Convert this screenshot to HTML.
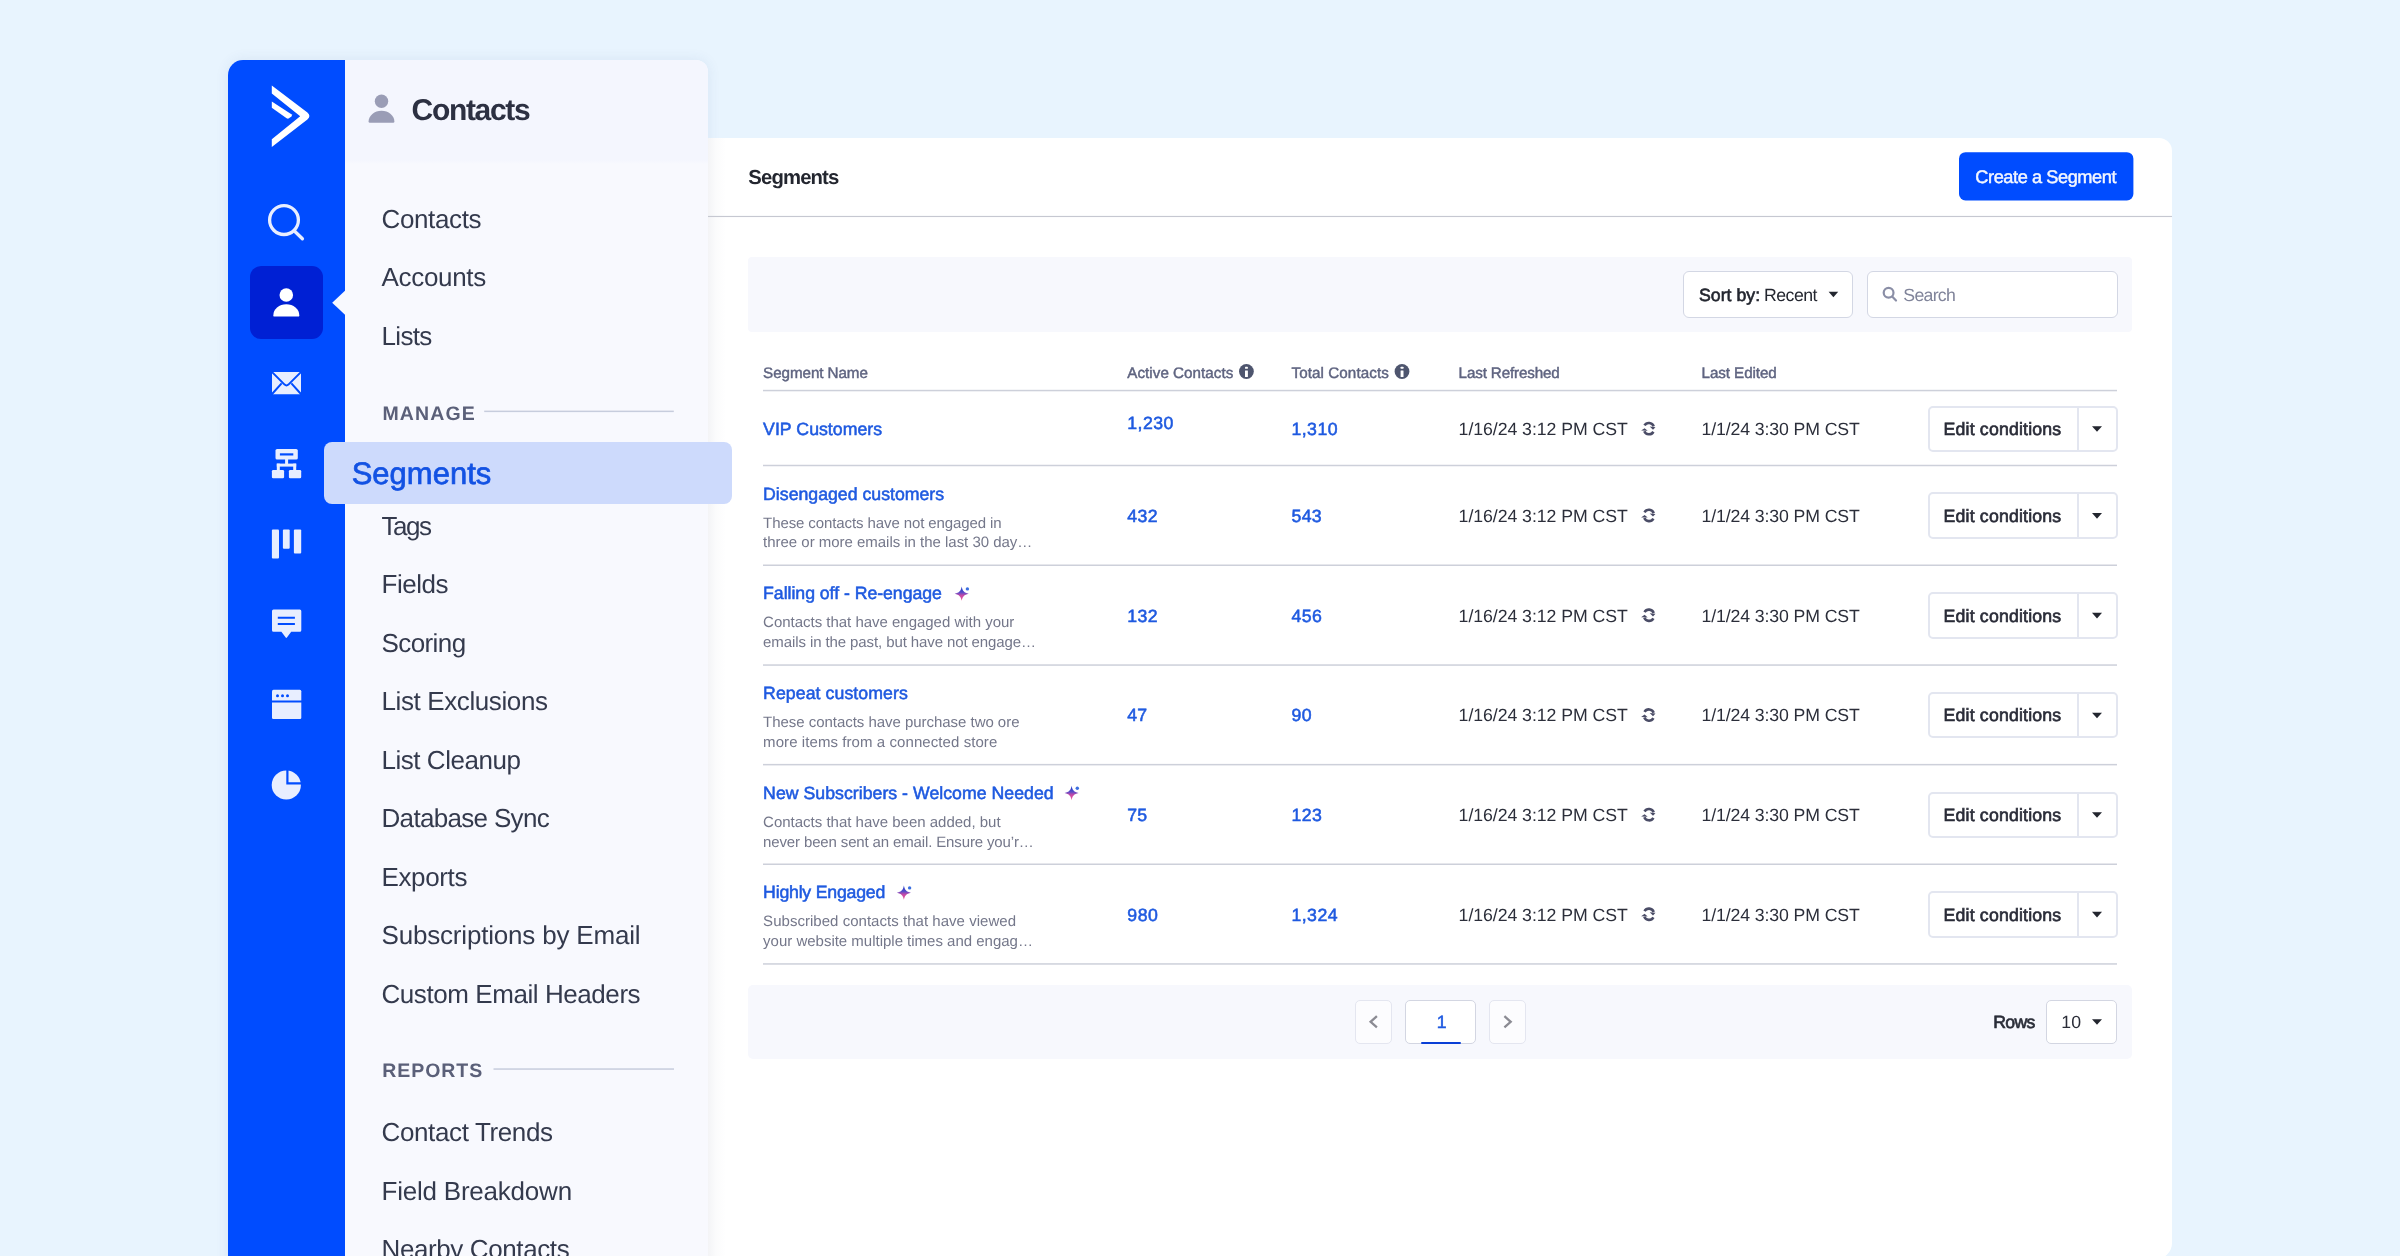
<!DOCTYPE html>
<html lang="en"><head><meta charset="utf-8"><title>Segments</title>
<style>
html,body{margin:0;padding:0;}
body{width:2400px;height:1256px;overflow:hidden;position:relative;background:#e8f4fe;
 font-family:"Liberation Sans",sans-serif;}
body>*{position:absolute;}
.t{position:absolute;white-space:pre;line-height:1em;text-rendering:geometricPrecision;font-family:"Liberation Sans",sans-serif;}
svg{position:absolute;overflow:visible;}
/* blue rail */
#side{left:228px;top:60px;width:480px;height:1210px;border-radius:15px 12px 0 0;box-shadow:0 0 14px rgba(50,80,140,.09);}
#rail{left:228px;top:60px;width:117px;height:1200px;background:#004cff;border-top-left-radius:15px;}
#act{left:250px;top:266px;width:73px;height:73px;border-radius:11px;background:#0020d4;}
/* light nav */
#nav{left:345px;top:60px;width:363px;height:1200px;background:#f8f9fe;border-top-right-radius:12px;}
#navh{left:345px;top:60px;width:363px;height:104px;background:linear-gradient(#f4f6fe 0,#f4f6fe 96%,#f8f9fe 100%);border-top-right-radius:12px;}
#sel{left:324px;top:442px;width:408px;height:61.5px;border-radius:8px;background:#cddafc;}
/* main panel */
#main{left:708px;top:138px;width:1464px;height:1121px;background:#fff;border-top-right-radius:13px;border-bottom-right-radius:16px;}
#shade{left:708px;top:138px;width:18px;height:1118px;background:linear-gradient(90deg,rgba(60,70,110,.06),rgba(60,70,110,.018) 45%,rgba(60,70,110,0));}
#tool{left:748px;top:257px;width:1384.4px;height:74.8px;border-radius:4px;background:#f7f8fd;}
.box{box-sizing:border-box;background:#fff;border:1.3px solid #d3d7e4;border-radius:6px;}
#sort{left:1682.8px;top:271.1px;width:170.7px;height:46.6px;}
#srch{left:1867.4px;top:271.1px;width:250.2px;height:46.6px;}
.eb{left:1927.5px;width:190px;height:46.5px;box-sizing:border-box;border:2px solid #e3e6f0;border-radius:5px;background:#fff;}
.eb i{position:absolute;left:147.2px;top:0;width:2px;height:100%;background:#e3e6f0;}
#pag{left:748px;top:985px;width:1384.4px;height:73.6px;border-radius:5px;background:#f7f8fd;}
.pb{box-sizing:border-box;top:1000px;height:43.8px;border-radius:5px;}
#prev{left:1355.2px;width:36.5px;background:#fcfcfe;border:1.3px solid #e4e6f0;}
#next{left:1489.2px;width:36.5px;background:#fcfcfe;border:1.3px solid #e4e6f0;}
#p1{left:1405.2px;width:71.3px;background:#fff;border:1.3px solid #d3d6e2;}
#p1u{left:1420.8px;top:1041.6px;width:39.9px;height:2.6px;background:#0a3fd6;border-radius:1px;}
#rsel{left:2046.3px;width:70.4px;background:#fff;border:1.3px solid #d3d6e2;}
#txt{left:0;top:0;width:2400px;height:1256px;will-change:transform;}

</style></head>
<body>
<div id="side"></div>
<div id="rail"></div>
<div id="nav"></div>
<div id="navh"></div>
<div id="main"></div>
<div id="shade"></div>
<div id="tool"></div>
<div id="sort" class="box"></div>
<div id="srch" class="box"></div>
<div id="pag"></div>
<div id="prev" class="pb"></div>
<div id="p1" class="pb"></div>
<div id="p1u"></div>
<div id="next" class="pb"></div>
<div id="rsel" class="pb"></div>
<div id="act"></div>
<div id="sel"></div>
<svg id="ico" style="left:0;top:0" width="2400" height="1256" viewBox="0 0 2400 1256">
<rect x="1959" y="152.2" width="174.4" height="48.3" rx="6.5" fill="#004cff"/>
<!-- lines -->
<g fill="#cdd0da">
<rect x="708" y="215.9" width="1464" height="1.15" fill="#c6c8d1"/>
<rect x="763" y="389.8" width="1354" height="1.5"/>
<rect x="763" y="464.75" width="1354" height="1.5"/>
<rect x="763" y="564.5" width="1354" height="1.5"/>
<rect x="763" y="664.3" width="1354" height="1.5"/>
<rect x="763" y="763.9" width="1354" height="1.5"/>
<rect x="763" y="863.5" width="1354" height="1.5"/>
<rect x="763" y="963.2" width="1354" height="1.5"/>
</g>
<g fill="#c7cddd">
<rect x="484.2" y="410.6" width="189.6" height="1.5"/>
<rect x="493.5" y="1068.3" width="180.5" height="1.5"/>
</g>
<!-- logo -->
<g fill="#ffffff">
<path d="M271.8 85.6L307.4 112.4Q309.4 114.2 309.4 116Q309.4 117.8 307.4 119.6L271.8 147L271.8 139.2L300.2 116.2L271.8 93.4Z"/>
<path d="M271.8 101.5L291.4 114.2Q292.6 115.2 291.4 116.4L289 118.3Q287.8 119 286.6 118.2L271.8 107.8Z"/>
</g>
<!-- search -->
<g fill="none" stroke="#e8eeff" stroke-width="3.3" stroke-linecap="round">
<circle cx="284" cy="220.1" r="14.4"/><path d="M294.4 231L302.4 238.8"/>
</g>
<!-- pointer -->
<path fill="#f8f9fe" d="M345.5 290.2L332.2 302.8L345.5 315.2Z"/>
<!-- active person -->
<g fill="#ffffff">
<circle cx="286.3" cy="295" r="6.8"/>
<path d="M273.3 315.4A13 11.2 0 0 1 299.3 315.4Q299.3 316.6 298.1 316.6H274.5Q273.3 316.6 273.3 315.4Z"/>
</g>
<!-- header person -->
<g fill="#9a9db6">
<circle cx="381.5" cy="101.2" r="6.7"/>
<path d="M368.6 121.5A12.9 10.7 0 0 1 394.4 121.5Q394.4 122.7 393.2 122.7H369.8Q368.6 122.7 368.6 121.5Z"/>
</g>
<g fill="#e8eeff">
<!-- mail -->
<rect x="272" y="371.9" width="29" height="22.3" rx="1"/>
<!-- automation -->
<rect x="275.5" y="448.9" width="22.3" height="10.7" rx="1.6"/>
<rect x="285.1" y="459" width="3" height="6"/>
<rect x="276.8" y="463.6" width="19.4" height="3"/>
<rect x="276.8" y="463.6" width="3" height="7"/>
<rect x="293.2" y="463.6" width="3" height="7"/>
<rect x="271.9" y="469.9" width="12.2" height="8.4" rx="1.3"/>
<rect x="288.9" y="469.9" width="12.3" height="8.4" rx="1.3"/>
<!-- pipeline -->
<rect x="271.9" y="529.4" width="7.1" height="29" rx="1"/>
<rect x="282.9" y="529.4" width="6.8" height="19.3" rx="1"/>
<rect x="293.9" y="529.4" width="7.3" height="24.2" rx="1"/>
<!-- chat -->
<path d="M273.5 609.6H299.8Q301.3 609.6 301.3 611.1V630.2Q301.3 631.7 299.8 631.7H291.2L286.9 637.6Q286.3 638.3 285.7 637.6L281.4 631.7H273.5Q272 631.7 272 630.2V611.1Q272 609.6 273.5 609.6Z"/>
<!-- window -->
<path d="M273.5 689.8H299.8Q301.3 689.8 301.3 691.3V700.4H272V691.3Q272 689.8 273.5 689.8Z"/>
<path d="M272 702.6H301.3V717.8Q301.3 719.1 300 719.1H273.3Q272 719.1 272 717.8Z"/>
<!-- pie -->
<circle cx="286.3" cy="785" r="14.6"/>
</g>
<g fill="none" stroke="#004cff">
<!-- mail lines -->
<path stroke-width="2" d="M271.6 371.6L284.6 384.6Q286.5 386.3 288.4 384.6L301.4 371.6M271.6 394.5L281.6 383.4M301.4 394.5L291.4 383.4"/>
<!-- automation slot -->
<path stroke-width="2.2" d="M279.9 454.4H293.3"/>
<!-- chat lines -->
<path stroke-width="2" d="M277.8 617.8H294.9M277.8 623.9H294.9"/>
<!-- pie cut -->
<path stroke-width="2.2" d="M287.4 769V783.3H302"/>
</g>
<g fill="#004cff"><circle cx="277.5" cy="695.7" r="1.5"/><circle cx="282.5" cy="695.7" r="1.5"/><circle cx="287.5" cy="695.7" r="1.5"/></g>
<!-- sort caret -->
<path fill="#23262f" d="M1828.6 291.7H1838.2L1833.4 297.2Z"/>
<!-- search icon small -->
<g fill="none" stroke="#8a8ea6" stroke-width="2.2" stroke-linecap="round"><circle cx="1888.6" cy="292.8" r="4.9"/><path d="M1892.4 296.8L1896 300.5"/></g>
<!-- info icons -->
<g fill="#4e556e"><circle cx="1246.4" cy="371.5" r="7.4"/><circle cx="1402" cy="371.5" r="7.4"/></g>
<g fill="#ffffff">
<rect x="1245" y="366.7" width="2.9" height="2.1" rx=".6"/><rect x="1245" y="370.4" width="2.9" height="6.7" rx=".4"/>
<rect x="1400.6" y="366.7" width="2.9" height="2.1" rx=".6"/><rect x="1400.6" y="370.4" width="2.9" height="6.7" rx=".4"/>
</g>
<!-- pager chevrons -->
<g fill="none" stroke="#8b8b93" stroke-width="2.3">
<path d="M1376.9 1016.2L1370.6 1021.8L1376.9 1027.4"/>
<path d="M1504.4 1016.2L1510.7 1021.8L1504.4 1027.4"/>
</g>
<!-- rows caret -->
<path fill="#23262f" d="M2092 1019.2H2102L2097 1024.8Z"/>
</svg>

<div class="eb" style="top:405.50px"><i></i></div>
<div class="eb" style="top:492.35px"><i></i></div>
<div class="eb" style="top:592.15px"><i></i></div>
<div class="eb" style="top:691.95px"><i></i></div>
<div class="eb" style="top:791.55px"><i></i></div>
<div class="eb" style="top:891.15px"><i></i></div>
<svg id="ico2" style="left:0;top:0" width="2400" height="1256" viewBox="0 0 2400 1256">
<defs><linearGradient id="spg" x1="0" y1="0" x2="0" y2="1"><stop offset="0" stop-color="#1236c8"/><stop offset=".42" stop-color="#5a4cc8"/><stop offset=".62" stop-color="#c24aa8"/><stop offset="1" stop-color="#f0559a"/></linearGradient></defs>
<path fill="#23262f" d="M2092.0 426.20h10l-5 5.6z"/>
<g transform="translate(1640.6 420.15)"><g fill="none" stroke="#4a4c66" stroke-width="2.6"><path d="M3.9 5.3A5.1 5.1 0 0 1 13.1 6.2"/><path d="M12.8 11.6A5.1 5.1 0 0 1 3.7 11"/></g><path fill="#4a4c66" d="M9.1 6.4L14.9 7L12.4 9.6ZM0.5 10.4L4 8L7.1 10.6Z"/></g>
<path fill="#23262f" d="M2092.0 513.05h10l-5 5.6z"/>
<g transform="translate(1640.6 507.00)"><g fill="none" stroke="#4a4c66" stroke-width="2.6"><path d="M3.9 5.3A5.1 5.1 0 0 1 13.1 6.2"/><path d="M12.8 11.6A5.1 5.1 0 0 1 3.7 11"/></g><path fill="#4a4c66" d="M9.1 6.4L14.9 7L12.4 9.6ZM0.5 10.4L4 8L7.1 10.6Z"/></g>
<path fill="#23262f" d="M2092.0 612.85h10l-5 5.6z"/>
<g transform="translate(1640.6 606.80)"><g fill="none" stroke="#4a4c66" stroke-width="2.6"><path d="M3.9 5.3A5.1 5.1 0 0 1 13.1 6.2"/><path d="M12.8 11.6A5.1 5.1 0 0 1 3.7 11"/></g><path fill="#4a4c66" d="M9.1 6.4L14.9 7L12.4 9.6ZM0.5 10.4L4 8L7.1 10.6Z"/></g>
<g transform="translate(954.0 585.6)"><path fill="url(#spg)" d="M7.7 0.8C8.4 5.1 10.1 7 14.7 8.05C10.1 9.1 8.4 11 7.7 15.2C7 11 5.3 9.1 0.7 8.05C5.3 7 7 5.1 7.7 0.8Z"/><circle cx="13.4" cy="3.3" r="1.7" fill="#3b6fe0"/></g>
<path fill="#23262f" d="M2092.0 712.65h10l-5 5.6z"/>
<g transform="translate(1640.6 706.60)"><g fill="none" stroke="#4a4c66" stroke-width="2.6"><path d="M3.9 5.3A5.1 5.1 0 0 1 13.1 6.2"/><path d="M12.8 11.6A5.1 5.1 0 0 1 3.7 11"/></g><path fill="#4a4c66" d="M9.1 6.4L14.9 7L12.4 9.6ZM0.5 10.4L4 8L7.1 10.6Z"/></g>
<path fill="#23262f" d="M2092.0 812.25h10l-5 5.6z"/>
<g transform="translate(1640.6 806.20)"><g fill="none" stroke="#4a4c66" stroke-width="2.6"><path d="M3.9 5.3A5.1 5.1 0 0 1 13.1 6.2"/><path d="M12.8 11.6A5.1 5.1 0 0 1 3.7 11"/></g><path fill="#4a4c66" d="M9.1 6.4L14.9 7L12.4 9.6ZM0.5 10.4L4 8L7.1 10.6Z"/></g>
<g transform="translate(1063.9 785.0)"><path fill="url(#spg)" d="M7.7 0.8C8.4 5.1 10.1 7 14.7 8.05C10.1 9.1 8.4 11 7.7 15.2C7 11 5.3 9.1 0.7 8.05C5.3 7 7 5.1 7.7 0.8Z"/><circle cx="13.4" cy="3.3" r="1.7" fill="#3b6fe0"/></g>
<path fill="#23262f" d="M2092.0 911.85h10l-5 5.6z"/>
<g transform="translate(1640.6 905.80)"><g fill="none" stroke="#4a4c66" stroke-width="2.6"><path d="M3.9 5.3A5.1 5.1 0 0 1 13.1 6.2"/><path d="M12.8 11.6A5.1 5.1 0 0 1 3.7 11"/></g><path fill="#4a4c66" d="M9.1 6.4L14.9 7L12.4 9.6ZM0.5 10.4L4 8L7.1 10.6Z"/></g>
<g transform="translate(896.2 884.6)"><path fill="url(#spg)" d="M7.7 0.8C8.4 5.1 10.1 7 14.7 8.05C10.1 9.1 8.4 11 7.7 15.2C7 11 5.3 9.1 0.7 8.05C5.3 7 7 5.1 7.7 0.8Z"/><circle cx="13.4" cy="3.3" r="1.7" fill="#3b6fe0"/></g>
</svg>
<div id="txt">
<span class="t" style="left:411.6px;top:96px;font-size:30px;color:#2c3042;font-weight:700;letter-spacing:-1.337px;">Contacts</span>
<span class="t" style="left:381.5px;top:206px;font-size:26px;color:#343a4d;letter-spacing:-0.373px;">Contacts</span>
<span class="t" style="left:381.5px;top:264px;font-size:26px;color:#343a4d;letter-spacing:-0.322px;">Accounts</span>
<span class="t" style="left:381.5px;top:323px;font-size:26px;color:#343a4d;letter-spacing:-0.667px;">Lists</span>
<span class="t" style="left:382.5px;top:405px;font-size:19.5px;color:#5b6079;font-weight:700;letter-spacing:1.106px;">MANAGE</span>
<span class="t" style="left:351.7px;top:458px;font-size:31px;color:#1352e3;letter-spacing:0.003px;-webkit-text-stroke:0.7px #1352e3;">Segments</span>
<span class="t" style="left:381.5px;top:513px;font-size:26px;color:#343a4d;letter-spacing:-1.474px;">Tags</span>
<span class="t" style="left:381.5px;top:571px;font-size:26px;color:#343a4d;letter-spacing:-0.492px;">Fields</span>
<span class="t" style="left:381.5px;top:630px;font-size:26px;color:#343a4d;letter-spacing:-0.593px;">Scoring</span>
<span class="t" style="left:381.5px;top:688px;font-size:26px;color:#343a4d;letter-spacing:-0.391px;">List Exclusions</span>
<span class="t" style="left:381.5px;top:747px;font-size:26px;color:#343a4d;letter-spacing:-0.468px;">List Cleanup</span>
<span class="t" style="left:381.5px;top:805px;font-size:26px;color:#343a4d;letter-spacing:-0.677px;">Database Sync</span>
<span class="t" style="left:381.5px;top:864px;font-size:26px;color:#343a4d;letter-spacing:-0.376px;">Exports</span>
<span class="t" style="left:381.5px;top:922px;font-size:26px;color:#343a4d;letter-spacing:-0.186px;">Subscriptions by Email</span>
<span class="t" style="left:381.5px;top:981px;font-size:26px;color:#343a4d;letter-spacing:-0.432px;">Custom Email Headers</span>
<span class="t" style="left:382.2px;top:1062px;font-size:19.5px;color:#5b6079;font-weight:700;letter-spacing:0.956px;">REPORTS</span>
<span class="t" style="left:381.5px;top:1119px;font-size:26px;color:#343a4d;letter-spacing:-0.37px;">Contact Trends</span>
<span class="t" style="left:381.5px;top:1178px;font-size:26px;color:#343a4d;letter-spacing:-0.218px;">Field Breakdown</span>
<span class="t" style="left:381.5px;top:1236px;font-size:26px;color:#343a4d;letter-spacing:-0.39px;">Nearby Contacts</span>
<span class="t" style="left:748.3px;top:168px;font-size:20.3px;color:#23262f;font-weight:700;letter-spacing:-0.848px;">Segments</span>
<span class="t" style="left:1975.3px;top:168px;font-size:18.2px;color:#f4f7ff;letter-spacing:-0.427px;-webkit-text-stroke:0.45px #f4f7ff;">Create a Segment</span>
<span class="t" style="left:1699.0px;top:287px;font-size:17.7px;color:#23262f;letter-spacing:0.021px;-webkit-text-stroke:0.6px #23262f;">Sort by:</span>
<span class="t" style="left:1764.0px;top:287px;font-size:17.7px;color:#23262f;letter-spacing:-0.509px;">Recent</span>
<span class="t" style="left:1903.3px;top:287px;font-size:17.7px;color:#80849a;letter-spacing:-0.709px;">Search</span>
<span class="t" style="left:763.1px;top:366px;font-size:15.2px;color:#5f6480;letter-spacing:-0.066px;-webkit-text-stroke:0.45px #5f6480;">Segment Name</span>
<span class="t" style="left:1127.3px;top:366px;font-size:15.2px;color:#5f6480;letter-spacing:0.035px;-webkit-text-stroke:0.45px #5f6480;">Active Contacts</span>
<span class="t" style="left:1291.5px;top:366px;font-size:15.2px;color:#5f6480;letter-spacing:0.082px;-webkit-text-stroke:0.45px #5f6480;">Total Contacts</span>
<span class="t" style="left:1458.6px;top:366px;font-size:15.2px;color:#5f6480;letter-spacing:-0.138px;-webkit-text-stroke:0.45px #5f6480;">Last Refreshed</span>
<span class="t" style="left:1701.6px;top:366px;font-size:15.2px;color:#5f6480;letter-spacing:-0.08px;-webkit-text-stroke:0.45px #5f6480;">Last Edited</span>
<span class="t" style="left:763.1px;top:421px;font-size:17.7px;color:#1f5ae0;letter-spacing:0.031px;-webkit-text-stroke:0.55px #1f5ae0;">VIP Customers</span>
<span class="t" style="left:1127.3px;top:415px;font-size:17.7px;color:#1f5ae0;letter-spacing:0.434px;-webkit-text-stroke:0.55px #1f5ae0;">1,230</span>
<span class="t" style="left:1291.5px;top:421px;font-size:17.7px;color:#1f5ae0;letter-spacing:0.434px;-webkit-text-stroke:0.55px #1f5ae0;">1,310</span>
<span class="t" style="left:1458.6px;top:421px;font-size:17.7px;color:#2b2e3a;letter-spacing:-0.05px;">1/16/24 3:12 PM CST</span>
<span class="t" style="left:1701.6px;top:421px;font-size:17.7px;color:#2b2e3a;letter-spacing:-0.121px;">1/1/24 3:30 PM CST</span>
<span class="t" style="left:1943.5px;top:421px;font-size:17.7px;color:#2a2c38;letter-spacing:0.19px;-webkit-text-stroke:0.65px #2a2c38;">Edit conditions</span>
<span class="t" style="left:763.1px;top:486px;font-size:17.7px;color:#1f5ae0;letter-spacing:0.005px;-webkit-text-stroke:0.55px #1f5ae0;">Disengaged customers</span>
<span class="t" style="left:763.1px;top:516px;font-size:15px;color:#74778a;letter-spacing:-0.098px;">These contacts have not engaged in</span>
<span class="t" style="left:763.1px;top:535px;font-size:15px;color:#74778a;letter-spacing:-0.024px;">three or more emails in the last 30 day…</span>
<span class="t" style="left:1127.3px;top:508px;font-size:17.7px;color:#1f5ae0;letter-spacing:0.342px;-webkit-text-stroke:0.55px #1f5ae0;">432</span>
<span class="t" style="left:1291.5px;top:508px;font-size:17.7px;color:#1f5ae0;letter-spacing:0.342px;-webkit-text-stroke:0.55px #1f5ae0;">543</span>
<span class="t" style="left:1458.6px;top:508px;font-size:17.7px;color:#2b2e3a;letter-spacing:-0.05px;">1/16/24 3:12 PM CST</span>
<span class="t" style="left:1701.6px;top:508px;font-size:17.7px;color:#2b2e3a;letter-spacing:-0.121px;">1/1/24 3:30 PM CST</span>
<span class="t" style="left:1943.5px;top:508px;font-size:17.7px;color:#2a2c38;letter-spacing:0.19px;-webkit-text-stroke:0.65px #2a2c38;">Edit conditions</span>
<span class="t" style="left:763.1px;top:585px;font-size:17.7px;color:#1f5ae0;letter-spacing:-0.037px;-webkit-text-stroke:0.55px #1f5ae0;">Falling off - Re-engage</span>
<span class="t" style="left:763.1px;top:615px;font-size:15px;color:#74778a;letter-spacing:-0.018px;">Contacts that have engaged with your</span>
<span class="t" style="left:763.1px;top:635px;font-size:15px;color:#74778a;letter-spacing:-0.099px;">emails in the past, but have not engage…</span>
<span class="t" style="left:1127.3px;top:608px;font-size:17.7px;color:#1f5ae0;letter-spacing:0.442px;-webkit-text-stroke:0.55px #1f5ae0;">132</span>
<span class="t" style="left:1291.5px;top:608px;font-size:17.7px;color:#1f5ae0;letter-spacing:0.442px;-webkit-text-stroke:0.55px #1f5ae0;">456</span>
<span class="t" style="left:1458.6px;top:608px;font-size:17.7px;color:#2b2e3a;letter-spacing:-0.05px;">1/16/24 3:12 PM CST</span>
<span class="t" style="left:1701.6px;top:608px;font-size:17.7px;color:#2b2e3a;letter-spacing:-0.121px;">1/1/24 3:30 PM CST</span>
<span class="t" style="left:1943.5px;top:608px;font-size:17.7px;color:#2a2c38;letter-spacing:0.19px;-webkit-text-stroke:0.65px #2a2c38;">Edit conditions</span>
<span class="t" style="left:763.1px;top:685px;font-size:17.7px;color:#1f5ae0;letter-spacing:0.078px;-webkit-text-stroke:0.55px #1f5ae0;">Repeat customers</span>
<span class="t" style="left:763.1px;top:715px;font-size:15px;color:#74778a;letter-spacing:-0.036px;">These contacts have purchase two ore</span>
<span class="t" style="left:763.1px;top:735px;font-size:15px;color:#74778a;letter-spacing:0.076px;">more items from a connected store</span>
<span class="t" style="left:1127.3px;top:707px;font-size:17.7px;color:#1f5ae0;letter-spacing:0.113px;-webkit-text-stroke:0.55px #1f5ae0;">47</span>
<span class="t" style="left:1291.5px;top:707px;font-size:17.7px;color:#1f5ae0;letter-spacing:0.512px;-webkit-text-stroke:0.55px #1f5ae0;">90</span>
<span class="t" style="left:1458.6px;top:707px;font-size:17.7px;color:#2b2e3a;letter-spacing:-0.05px;">1/16/24 3:12 PM CST</span>
<span class="t" style="left:1701.6px;top:707px;font-size:17.7px;color:#2b2e3a;letter-spacing:-0.121px;">1/1/24 3:30 PM CST</span>
<span class="t" style="left:1943.5px;top:707px;font-size:17.7px;color:#2a2c38;letter-spacing:0.19px;-webkit-text-stroke:0.65px #2a2c38;">Edit conditions</span>
<span class="t" style="left:763.1px;top:785px;font-size:17.7px;color:#1f5ae0;letter-spacing:0.027px;-webkit-text-stroke:0.55px #1f5ae0;">New Subscribers - Welcome Needed</span>
<span class="t" style="left:763.1px;top:815px;font-size:15px;color:#74778a;letter-spacing:-0.006px;">Contacts that have been added, but</span>
<span class="t" style="left:763.1px;top:835px;font-size:15px;color:#74778a;letter-spacing:-0.139px;">never been sent an email. Ensure you’r…</span>
<span class="t" style="left:1127.3px;top:807px;font-size:17.7px;color:#1f5ae0;letter-spacing:0.113px;-webkit-text-stroke:0.55px #1f5ae0;">75</span>
<span class="t" style="left:1291.5px;top:807px;font-size:17.7px;color:#1f5ae0;letter-spacing:0.442px;-webkit-text-stroke:0.55px #1f5ae0;">123</span>
<span class="t" style="left:1458.6px;top:807px;font-size:17.7px;color:#2b2e3a;letter-spacing:-0.05px;">1/16/24 3:12 PM CST</span>
<span class="t" style="left:1701.6px;top:807px;font-size:17.7px;color:#2b2e3a;letter-spacing:-0.121px;">1/1/24 3:30 PM CST</span>
<span class="t" style="left:1943.5px;top:807px;font-size:17.7px;color:#2a2c38;letter-spacing:0.19px;-webkit-text-stroke:0.65px #2a2c38;">Edit conditions</span>
<span class="t" style="left:763.1px;top:884px;font-size:17.7px;color:#1f5ae0;letter-spacing:-0.207px;-webkit-text-stroke:0.55px #1f5ae0;">Highly Engaged</span>
<span class="t" style="left:763.1px;top:914px;font-size:15px;color:#74778a;letter-spacing:0.031px;">Subscribed contacts that have viewed</span>
<span class="t" style="left:763.1px;top:934px;font-size:15px;color:#74778a;letter-spacing:-0.009px;">your website multiple times and engag…</span>
<span class="t" style="left:1127.3px;top:907px;font-size:17.7px;color:#1f5ae0;letter-spacing:0.542px;-webkit-text-stroke:0.55px #1f5ae0;">980</span>
<span class="t" style="left:1291.5px;top:907px;font-size:17.7px;color:#1f5ae0;letter-spacing:0.434px;-webkit-text-stroke:0.55px #1f5ae0;">1,324</span>
<span class="t" style="left:1458.6px;top:907px;font-size:17.7px;color:#2b2e3a;letter-spacing:-0.05px;">1/16/24 3:12 PM CST</span>
<span class="t" style="left:1701.6px;top:907px;font-size:17.7px;color:#2b2e3a;letter-spacing:-0.121px;">1/1/24 3:30 PM CST</span>
<span class="t" style="left:1943.5px;top:907px;font-size:17.7px;color:#2a2c38;letter-spacing:0.19px;-webkit-text-stroke:0.65px #2a2c38;">Edit conditions</span>
<span class="t" style="left:1436.7px;top:1014px;font-size:17.7px;color:#1f5ae0;-webkit-text-stroke:0.55px #1f5ae0;">1</span>
<span class="t" style="left:1993.3px;top:1014px;font-size:17.7px;color:#2a2d38;letter-spacing:-0.711px;-webkit-text-stroke:0.65px #2a2d38;">Rows</span>
<span class="t" style="left:2061.2px;top:1014px;font-size:17.7px;color:#2a2d38;letter-spacing:0.312px;">10</span>
</div>
</body></html>
